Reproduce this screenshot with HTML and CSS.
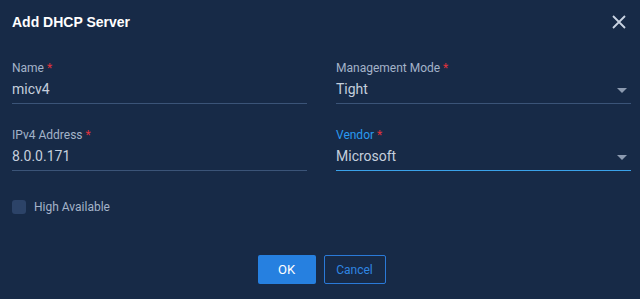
FILE: index.html
```html
<!DOCTYPE html>
<html lang="en">
<head>
    <meta charset="UTF-8">
    <meta name="viewport" content="width=device-width, initial-scale=1.0">
    <title>Add DHCP Server</title>
    <link rel="stylesheet" href="styles.css">
</head>
<body>
    <div class="dialog">
        <div class="dialog-header">
            <h2>Add DHCP Server</h2>
            <button class="close-btn" aria-label="Close">
                <svg width="14" height="14" viewBox="0 0 14 14">
                    <path d="M1 1 L13 13 M13 1 L1 13" stroke="#c9d3e2" stroke-width="1.8" fill="none"/>
                </svg>
            </button>
        </div>

        <div class="form-grid">
            <div class="field">
                <label>Name <span class="req">*</span></label>
                <div class="input">micv4</div>
            </div>
            <div class="field">
                <label>Management Mode <span class="req">*</span></label>
                <div class="input select">Tight<span class="caret"></span></div>
            </div>
            <div class="field">
                <label>IPv4 Address <span class="req">*</span></label>
                <div class="input">8.0.0.171</div>
            </div>
            <div class="field focused">
                <label>Vendor <span class="req">*</span></label>
                <div class="input select">Microsoft<span class="caret"></span></div>
            </div>
        </div>

        <div class="checkbox-row">
            <span class="checkbox"></span>
            <span>High Available</span>
        </div>

        <div class="actions">
            <button class="btn btn-primary">OK</button>
            <button class="btn btn-outline">Cancel</button>
        </div>
    </div>
</body>
</html>
```

FILE: styles.css
```css
* {
    margin: 0;
    padding: 0;
    box-sizing: border-box;
}

body {
    font-family: 'Roboto', 'Liberation Sans', Arial, sans-serif;
    background: #172a47;
    width: 640px;
    height: 299px;
    overflow: hidden;
}

.dialog {
    padding: 0 9px 0 12px;
}

.dialog-header {
    display: flex;
    justify-content: space-between;
    align-items: center;
    height: 43px;
}

.dialog-header h2 {
    font-family: 'Liberation Sans', Arial, sans-serif;
    font-size: 14px;
    font-weight: bold;
    color: #ffffff;
}

.close-btn {
    background: none;
    border: none;
    width: 14px;
    height: 14px;
    margin-right: 5px;
    cursor: pointer;
    display: flex;
}

.form-grid {
    display: grid;
    grid-template-columns: 295px 295px;
    column-gap: 29px;
    row-gap: 24px;
    margin-top: 18px;
}

.field label {
    display: block;
    font-size: 12px;
    line-height: 14px;
    color: #a4b3c9;
}

.req {
    color: #e0323c;
}

.input {
    position: relative;
    margin-top: 3px;
    height: 26px;
    line-height: 23px;
    font-size: 14px;
    color: #c5cfdd;
    border-bottom: 1px solid #3b5478;
}

.field.focused label {
    color: #2a9af0;
}

.field.focused .input {
    border-bottom-color: #3aa2ea;
}

.caret {
    position: absolute;
    right: 4px;
    top: 10px;
    width: 0;
    height: 0;
    border-left: 5px solid transparent;
    border-right: 5px solid transparent;
    border-top: 5px solid #8c9ab0;
}

.checkbox-row {
    display: flex;
    align-items: center;
    gap: 8px;
    margin-top: 29px;
    font-size: 12px;
    line-height: 14px;
    color: #a4b3c9;
}

.checkbox {
    width: 14px;
    height: 14px;
    border-radius: 3px;
    background: #2c4368;
}

.actions {
    display: flex;
    justify-content: center;
    gap: 8px;
    margin-top: 41px;
}

.btn {
    height: 29px;
    border-radius: 2px;
    font-family: 'Roboto', 'Liberation Sans', Arial, sans-serif;
    font-size: 12px;
    cursor: pointer;
}

.btn-primary {
    width: 58px;
    background: #2680e0;
    color: #ffffff;
    border: none;
    font-size: 13px;
}

.btn-outline {
    width: 62px;
    background: transparent;
    color: #2f86e2;
    border: 1px solid #2a7ad8;
}
```
